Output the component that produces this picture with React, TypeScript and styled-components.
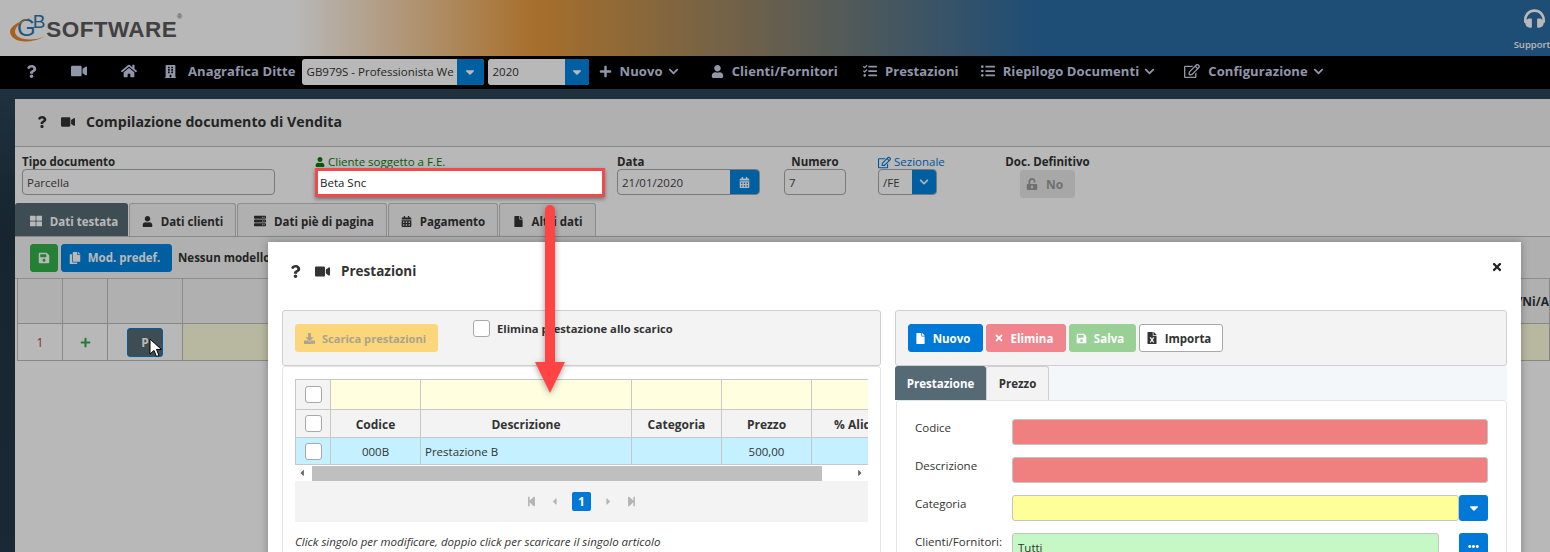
import React from "react";
import styled, { createGlobalStyle } from "styled-components";
import {
  FaBuilding,
  FaCalendarAlt,
  FaCaretDown,
  FaCaretLeft,
  FaCaretRight,
  FaChevronDown,
  FaCopy,
  FaDownload,
  FaEllipsisH,
  FaFile,
  FaFileExcel,
  FaHeadphones,
  FaHome,
  FaListUl,
  FaPlus,
  FaQuestion,
  FaRegEdit,
  FaSave,
  FaServer,
  FaStepBackward,
  FaStepForward,
  FaTasks,
  FaThLarge,
  FaTimes,
  FaUnlockAlt,
  FaUser,
  FaVideo,
} from "react-icons/fa";

const GlobalStyle = createGlobalStyle`
  html, body { margin: 0; padding: 0; background: #000; }
  * { box-sizing: border-box; }
`;

const Page = styled.div`
  position: relative;
  width: 1550px;
  height: 552px;
  overflow: hidden;
  font-family: "Open Sans", "Noto Sans", sans-serif;
  font-size: 12px;
  color: #333;
  display: flex;
  flex-direction: column;
`;

/* header */
const Header = styled.header`
  height: 56px;
  flex: none;
  display: flex;
  justify-content: space-between;
  background: linear-gradient(90deg, #fff 19%, #e89a3c 34.5%, #2a6ba3 67%, #2a6ba3 100%);
`;

const Logo = styled.div`
  position: relative;
  margin: 14px 0 0 10px;
  width: 176px;
  height: 32px;
  display: flex;
  align-items: flex-start;
  font-family: "Liberation Sans", Arial, sans-serif;
  font-weight: 700;
`;

const LogoSwoosh = styled.svg`
  position: absolute;
  left: 0;
  top: 0;
`;

const LogoG = styled.span`
  margin-left: 7px;
  margin-top: 1px;
  font-size: 24px;
  line-height: 26px;
  color: #2b78b0;
  font-weight: 400;
`;

const LogoB = styled.span`
  margin-top: -2px;
  margin-left: -3px;
  font-size: 19px;
  line-height: 20px;
  color: #2b78b0;
  font-weight: 400;
`;

const LogoWord = styled.span`
  margin-left: 1px;
  margin-top: 3px;
  font-size: 22.5px;
  line-height: 26px;
  letter-spacing: 0.4px;
  color: #5a5a5a;
`;

const LogoMark = styled.span`
  margin-top: -1px;
  font-size: 7px;
  line-height: 8px;
  color: #777;
`;

const Support = styled.div`
  flex: none;
  width: 40px;
  margin-right: -4px;
  padding-top: 8px;
  display: flex;
  flex-direction: column;
  align-items: center;
  gap: 9px;
  font-size: 9.5px;
  line-height: 13px;
  font-weight: 600;
  color: #fff;
  svg {
    width: 21px;
    height: 21px;
  }
`;

const SupportText = styled.span`
  margin-right: 4px;
`;

/* nav bar */
const Navbar = styled.nav`
  height: 33px;
  flex: none;
  display: flex;
  align-items: center;
  padding-bottom: 3px;
  background: #000;
  color: #cbd0ea;
  font-size: 13px;
  font-weight: 700;
`;

const NavItem = styled.div<{ $ml: number; $gap?: number }>`
  display: flex;
  align-items: center;
  flex: none;
  gap: ${(p) => p.$gap ?? 8}px;
  margin-left: ${(p) => p.$ml}px;
  white-space: nowrap;
  letter-spacing: 0.1px;
  svg {
    flex: none;
  }
`;

const NavChevron = styled(FaChevronDown)`
  width: 11px;
  height: 11px;
  margin-left: -3px;
`;

const NavSelect = styled.div<{ $w: number; $ml: number }>`
  flex: none;
  width: ${(p) => p.$w}px;
  margin-left: ${(p) => p.$ml}px;
  margin-top: 2px;
  height: 26px;
  display: flex;
  background: #fff;
  border-radius: 3px;
  overflow: hidden;
  color: #333;
  font-size: 11.5px;
  font-weight: 400;
  line-height: 26px;
`;

const NavSelectText = styled.div`
  flex: 1;
  min-width: 0;
  margin-right: 3px;
  padding-left: 5px;
  white-space: nowrap;
  overflow: hidden;
`;

const CaretButton = styled.div<{ $w: number }>`
  flex: none;
  width: ${(p) => p.$w}px;
  display: flex;
  align-items: center;
  justify-content: center;
  background: #0084e0;
  color: #fff;
`;

/* document panel behind the dialog */
const Workspace = styled.main`
  flex: 1;
  min-height: 0;
  padding: 10px 0 0 15px;
  background: linear-gradient(180deg, #2c4557 0%, #1f3442 30%, #26384a 100%);
`;

const Panel = styled.section`
  height: 100%;
  background: #fff;
  display: flex;
  flex-direction: column;
`;

const PanelTitle = styled.div`
  height: 48px;
  flex: none;
  display: flex;
  align-items: center;
  padding: 0 0 2px 21px;
  background: #f4f4f4;
  border-bottom: 1px solid #bdbdbd;
  color: #333;
  font-size: 14.2px;
  font-weight: 700;
`;

const TitleIcons = styled.div`
  display: flex;
  align-items: center;
  gap: 13px;
  margin-right: 11px;
`;

const FormRow = styled.div`
  height: 56px;
  flex: none;
  display: flex;
  padding: 8px 0 0 7px;
`;

const Field = styled.div<{ $w: number; $ml?: number; $center?: boolean }>`
  flex: none;
  width: ${(p) => p.$w}px;
  margin-left: ${(p) => p.$ml ?? 0}px;
  display: flex;
  flex-direction: column;
  align-items: ${(p) => (p.$center ? "center" : "stretch")};
`;

const FieldLabel = styled.label<{ $tone?: string; $center?: boolean }>`
  display: flex;
  align-items: center;
  justify-content: ${(p) => (p.$center ? "center" : "flex-start")};
  gap: 3px;
  height: 14px;
  white-space: nowrap;
  font-size: 11.5px;
  line-height: 14px;
  font-weight: ${(p) => (p.$tone ? 400 : 700)};
  color: ${(p) => p.$tone ?? "#333"};
  svg {
    flex: none;
  }
`;

const TextBox = styled.div`
  display: flex;
  height: 26px;
  border: 1px solid #a8a8a8;
  border-radius: 4px;
  overflow: hidden;
  font-size: 11.5px;
  line-height: 26px;
  color: #444;
`;

const TextBoxValue = styled.div`
  flex: 1;
  min-width: 0;
  padding-left: 4px;
  white-space: nowrap;
`;

const HighlightBox = styled.div`
  position: relative;
  z-index: 3;
  height: 29px;
  margin-top: -1px;
  padding-left: 2px;
  background: #fff;
  border: 3px solid #f04a4f;
  box-shadow: 0 2px 4px rgba(0, 0, 0, 0.4);
  font-size: 11.5px;
  line-height: 23px;
  color: #222;
`;

const DisabledSwitch = styled.div`
  margin-top: 1px;
  width: 55px;
  height: 28px;
  padding-right: 6px;
  display: flex;
  align-items: center;
  justify-content: center;
  gap: 8px;
  background: #e8e8e8;
  border-radius: 3px;
  color: #9c9c9c;
  font-weight: 700;
  font-size: 12px;
`;

const TabStrip = styled.div`
  height: 34px;
  flex: none;
  display: flex;
  align-items: stretch;
  border-bottom: 1px solid #bcbcbc;
`;

const TabButton = styled.div<{ $active?: boolean; $w: number; $shift?: number }>`
  width: ${(p) => p.$w}px;
  flex: none;
  display: flex;
  align-items: center;
  justify-content: center;
  gap: 8px;
  padding: 2px 0 0 ${(p) => p.$shift ?? 0}px;
  margin-right: 1px;
  white-space: nowrap;
  font-size: 11.5px;
  font-weight: 700;
  border: 1px solid ${(p) => (p.$active ? "#566a75" : "#c4c4c4")};
  border-bottom: 0;
  border-radius: 3px 3px 0 0;
  background: ${(p) => (p.$active ? "#566a75" : "#f4f4f4")};
  color: ${(p) => (p.$active ? "#fff" : "#333")};
`;

const ToolRow = styled.div`
  height: 42px;
  flex: none;
  display: flex;
  align-items: center;
  gap: 3px;
  padding-left: 15px;
  background: #f4f4f4;
  border-bottom: 1px solid #c4c4c4;
  font-size: 11.5px;
  font-weight: 700;
`;

const ActionButton = styled.div<{ $bg: string; $w: number; $fg?: string; $border?: string; $pr?: number }>`
  flex: none;
  width: ${(p) => p.$w}px;
  height: 28px;
  padding-right: ${(p) => p.$pr ?? 0}px;
  display: flex;
  align-items: center;
  justify-content: center;
  gap: 7px;
  white-space: nowrap;
  border-radius: 3px;
  border: 1px solid ${(p) => p.$border ?? p.$bg};
  background: ${(p) => p.$bg};
  color: ${(p) => p.$fg ?? "#fff"};
  font-size: 11.5px;
  font-weight: 700;
`;

const ScaricaLabel = styled.span`
  font-size: 11.1px;
`;

const ToolNote = styled.span`
  margin-left: 3px;
  white-space: nowrap;
  color: #333;
`;

const MainTable = styled.div`
  display: grid;
  grid-template-columns: 45px 45px 75px 1fr;
  grid-template-rows: 45px 37px;
  margin-left: 2px;
  border-left: 1px solid #bcbcbc;
`;

const MainCell = styled.div<{ $bg?: string; $fg?: string; $right?: boolean }>`
  display: flex;
  align-items: center;
  justify-content: ${(p) => (p.$right ? "flex-end" : "center")};
  border-right: 1px solid #bcbcbc;
  border-bottom: 1px solid #bcbcbc;
  background: ${(p) => p.$bg ?? "#f4f4f4"};
  color: ${(p) => p.$fg ?? "#333"};
  font-weight: ${(p) => (p.$right ? 700 : 400)};
  white-space: nowrap;
`;

const RowButton = styled.div`
  position: relative;
  width: 36px;
  height: 29px;
  display: flex;
  align-items: center;
  justify-content: center;
  background: #566a75;
  border: 1px solid #0084e0;
  border-radius: 3px;
  color: #fff;
  font-weight: 700;
`;

const Cursor = styled.svg`
  position: absolute;
  z-index: 3;
  left: 21px;
  top: 9px;
`;

const Backdrop = styled.div`
  position: absolute;
  inset: 0;
  z-index: 2;
  background: rgba(0, 0, 0, 0.28);
`;

/* dialog */
const Modal = styled.div`
  position: absolute;
  z-index: 4;
  left: 268px;
  top: 242px;
  width: 1253px;
  height: 330px;
  background: #fff;
  box-shadow: 0 0 8px rgba(0, 0, 0, 0.3);
  padding: 0 14px;
`;

const ModalHead = styled.div`
  height: 68px;
  display: flex;
  align-items: center;
  padding: 0 4px 10px 7px;
  color: #333;
  font-size: 13.5px;
  font-weight: 700;
`;

const ModalClose = styled(FaTimes)`
  width: 12px;
  height: 12px;
  margin-left: auto;
  margin-top: -8px;
  color: #222;
`;

const ModalColumns = styled.div`
  display: grid;
  grid-template-columns: 599px 612px;
  column-gap: 14px;
`;

const Toolbar = styled.div`
  position: relative;
  height: 56px;
  display: flex;
  align-items: center;
  gap: 3px;
  padding-left: 12px;
  background: #f3f3f3;
  border: 1px solid #cfcfcf;
  border-radius: 3px;
`;

const CheckRow = styled.div`
  display: flex;
  align-items: center;
  gap: 7px;
  align-self: flex-start;
  margin: 9px 0 0 32px;
  font-size: 11.2px;
  font-weight: 700;
  white-space: nowrap;
`;

const CheckBox = styled.span`
  flex: none;
  display: block;
  width: 17px;
  height: 17px;
  background: #fff;
  border: 1px solid #a8a8a8;
  border-radius: 3px;
`;

const ListCard = styled.div`
  height: 200px;
  padding: 12px 12px 0;
  border: 1px solid #e2e6ea;
  border-radius: 3px;
`;

const GridWrap = styled.div`
  overflow: hidden;
`;

const DataGrid = styled.div`
  display: grid;
  width: 640px;
  grid-template-columns: 35px 90px 211px 90px 90px 110px;
  grid-template-rows: 30px 28px 27px;
  border-left: 1px solid #c8c8c8;
  border-top: 1px solid #c8c8c8;
`;

const DataCell = styled.div<{ $bg: string; $head?: boolean; $left?: boolean }>`
  display: flex;
  align-items: center;
  justify-content: ${(p) => (p.$left ? "flex-start" : "center")};
  padding-left: ${(p) => (p.$left ? "4px" : "0")};
  padding-top: ${(p) => (p.$head ? "1px" : "0")};
  white-space: nowrap;
  background: ${(p) => p.$bg};
  border-right: 1px solid #c8c8c8;
  border-bottom: 1px solid #c8c8c8;
  font-size: ${(p) => (p.$head ? "12px" : "11.5px")};
  font-weight: ${(p) => (p.$head ? 700 : 400)};
  color: #333;
`;

const ScrollBar = styled.div`
  height: 16px;
  padding: 0 3px 0 2px;
  display: flex;
  align-items: center;
  color: #666;
  svg {
    flex: none;
    width: 10px;
    height: 10px;
  }
`;

const ScrollTrack = styled.div`
  flex: 1;
  height: 15px;
  padding-right: 33px;
  margin-left: 5px;
`;

const ScrollThumb = styled.div`
  height: 100%;
  background: #bfbfbf;
`;

const Pager = styled.div`
  height: 41px;
  display: flex;
  align-items: center;
  justify-content: center;
  gap: 12px;
  background: #f3f3f3;
  color: #b4b4b4;
  svg {
    width: 11px;
    height: 11px;
  }
`;

const PageNumber = styled.span`
  width: 19px;
  height: 19px;
  display: flex;
  align-items: center;
  justify-content: center;
  background: #0078d7;
  border-radius: 2px;
  color: #fff;
  font-weight: 700;
  font-size: 12px;
`;

const Hint = styled.p`
  margin: 12px 0 0;
  font-size: 11.5px;
  line-height: 16px;
  font-style: italic;
  color: #333;
  white-space: nowrap;
`;

const SubTabs = styled.div`
  height: 34px;
  display: flex;
  background: #f4f7f9;
`;

const SubTab = styled.div<{ $active?: boolean; $w: number }>`
  flex: none;
  width: ${(p) => p.$w}px;
  display: flex;
  align-items: center;
  justify-content: center;
  font-size: 11.5px;
  font-weight: 700;
  border: 1px solid ${(p) => (p.$active ? "#566a75" : "#cfcfcf")};
  border-bottom: 0;
  border-radius: 3px 3px 0 0;
  background: ${(p) => (p.$active ? "#566a75" : "#f3f3f3")};
  color: ${(p) => (p.$active ? "#fff" : "#333")};
`;

const DetailCard = styled.div`
  height: 170px;
  margin-left: 1px;
  padding: 18px 18px 0;
  display: flex;
  flex-direction: column;
  gap: 12px;
  border: 1px solid #e2e6ea;
  border-radius: 3px;
`;

const DetailRow = styled.div`
  display: grid;
  grid-template-columns: 97px 1fr;
  height: 26px;
`;

const DetailLabel = styled.div`
  padding-top: 1px;
  font-size: 11.5px;
  line-height: 16px;
  color: #333;
  white-space: nowrap;
`;

const ColorInput = styled.div<{ $bg: string }>`
  height: 26px;
  padding-left: 5px;
  background: ${(p) => p.$bg};
  border: 1px solid #c4c4c4;
  border-radius: 3px;
  font-size: 11.5px;
  line-height: 28px;
  color: #333;
`;

const InputGroup = styled.div`
  display: flex;
  height: 26px;
`;

const GrowInput = styled(ColorInput)`
  flex: 1;
`;

const SideButton = styled.div<{ $ml?: number }>`
  flex: none;
  width: 29px;
  height: 26px;
  margin-left: ${(p) => p.$ml ?? 0}px;
  display: flex;
  align-items: center;
  justify-content: center;
  background: #0078d7;
  border-radius: 3px;
  color: #fff;
`;

const Arrow = styled.svg`
  position: absolute;
  z-index: 5;
  left: 528px;
  top: 200px;
  filter: drop-shadow(0 2px 3px rgba(0, 0, 0, 0.35));
`;

const gridColumns = ["Codice", "Descrizione", "Categoria", "Prezzo", "% Aliquota"];

export default function App() {
  return (
    <Page>
      <GlobalStyle />
      <Header>
        <Logo>
          <LogoSwoosh width="50" height="32" viewBox="0 0 50 32">
            <path d="M23 3 C9 7 0 12 0 18 C1 27 16 32 36 22 C22 28 6 26 5 18 C5 12 12 7 23 3 Z" fill="#e8872a" />
          </LogoSwoosh>
          <LogoG>G</LogoG>
          <LogoB>B</LogoB>
          <LogoWord>SOFTWARE</LogoWord>
          <LogoMark>®</LogoMark>
        </Logo>
        <Support>
          <FaHeadphones />
          <SupportText>Support</SupportText>
        </Support>
      </Header>

      <Navbar>
        <NavItem $ml={25}><FaQuestion size={13} /></NavItem>
        <NavItem $ml={33}><FaVideo size={16} /></NavItem>
        <NavItem $ml={34}><FaHome size={16} /></NavItem>
        <NavItem $ml={27} $gap={11}>
          <FaBuilding size={13} />
          <span>Anagrafica Ditte</span>
        </NavItem>
        <NavSelect $w={182} $ml={6}>
          <NavSelectText>GB979S - Professionista Web</NavSelectText>
          <CaretButton $w={27}><FaCaretDown size={14} /></CaretButton>
        </NavSelect>
        <NavSelect $w={101} $ml={4}>
          <NavSelectText>2020</NavSelectText>
          <CaretButton $w={24}><FaCaretDown size={14} /></CaretButton>
        </NavSelect>
        <NavItem $ml={10}>
          <FaPlus size={13} />
          <span>Nuovo</span>
          <NavChevron />
        </NavItem>
        <NavItem $ml={32}>
          <FaUser size={13} />
          <span>Clienti/Fornitori</span>
        </NavItem>
        <NavItem $ml={25}>
          <FaTasks size={14} />
          <span>Prestazioni</span>
        </NavItem>
        <NavItem $ml={22}>
          <FaListUl size={14} />
          <span>Riepilogo Documenti</span>
          <NavChevron />
        </NavItem>
        <NavItem $ml={29}>
          <FaRegEdit size={16} />
          <span>Configurazione</span>
          <NavChevron />
        </NavItem>
      </Navbar>

      <Workspace>
        <Panel>
          <PanelTitle>
            <TitleIcons>
              <FaQuestion size={12} />
              <FaVideo size={14} />
            </TitleIcons>
            Compilazione documento di Vendita
          </PanelTitle>

          <FormRow>
            <Field $w={253}>
              <FieldLabel>Tipo documento</FieldLabel>
              <TextBox><TextBoxValue>Parcella</TextBoxValue></TextBox>
            </Field>
            <Field $w={290} $ml={40}>
              <FieldLabel $tone="#0b7a0b"><FaUser size={10} />Cliente soggetto a F.E.</FieldLabel>
              <HighlightBox>Beta Snc</HighlightBox>
            </Field>
            <Field $w={143} $ml={12}>
              <FieldLabel>Data</FieldLabel>
              <TextBox>
                <TextBoxValue>21/01/2020</TextBoxValue>
                <CaretButton $w={29}><FaCalendarAlt size={11} /></CaretButton>
              </TextBox>
            </Field>
            <Field $w={62} $ml={24}>
              <FieldLabel $center>Numero</FieldLabel>
              <TextBox><TextBoxValue>7</TextBoxValue></TextBox>
            </Field>
            <Field $w={59} $ml={32}>
              <FieldLabel $tone="#0078d7"><FaRegEdit size={13} />Sezionale</FieldLabel>
              <TextBox>
                <TextBoxValue>/FE</TextBoxValue>
                <CaretButton $w={24}><FaChevronDown size={10} /></CaretButton>
              </TextBox>
            </Field>
            <Field $w={85} $ml={68} $center>
              <FieldLabel $center>Doc. Definitivo</FieldLabel>
              <DisabledSwitch><FaUnlockAlt size={12} />No</DisabledSwitch>
            </Field>
          </FormRow>

          <TabStrip>
            <TabButton $active $w={113} $shift={5}><FaThLarge size={12} />Dati testata</TabButton>
            <TabButton $w={107}><FaUser size={11} />Dati clienti</TabButton>
            <TabButton $w={150} $shift={4}><FaServer size={12} />Dati piè di pagina</TabButton>
            <TabButton $w={110}><FaCalendarAlt size={11} />Pagamento</TabButton>
            <TabButton $w={97}><FaFile size={11} />Altri dati</TabButton>
          </TabStrip>

          <ToolRow>
            <ActionButton $bg="#33b24a" $w={28}><FaSave size={12} /></ActionButton>
            <ActionButton $bg="#0084e0" $w={111} $pr={4}><FaCopy size={12} />Mod. predef.</ActionButton>
            <ToolNote>Nessun modello predefinito</ToolNote>
          </ToolRow>

          <MainTable>
            <MainCell />
            <MainCell />
            <MainCell />
            <MainCell $right>IVA (N/Ni/A</MainCell>
            <MainCell $bg="#fff" $fg="#b84a3a">1</MainCell>
            <MainCell $bg="#fff" $fg="#3aa84a"><FaPlus size={11} /></MainCell>
            <MainCell $bg="#fff">
              <RowButton>
                P
                <Cursor width="14" height="20" viewBox="0 0 14 20">
                  <path d="M1 1 L1 16 L5 12.5 L7.5 18.5 L10 17.5 L7.5 11.5 L12.5 11.5 Z" fill="#fff" stroke="#000" strokeWidth="1" />
                </Cursor>
              </RowButton>
            </MainCell>
            <MainCell $bg="#ffffe0" />
          </MainTable>
        </Panel>
      </Workspace>

      <Backdrop />

      <Modal>
        <ModalHead>
          <TitleIcons>
            <FaQuestion size={13} />
            <FaVideo size={15} />
          </TitleIcons>
          Prestazioni
          <ModalClose />
        </ModalHead>
        <ModalColumns>
          <div>
            <Toolbar>
              <ActionButton $bg="#fbd67a" $w={143} $fg="#a9a48f" $pr={3}><FaDownload size={11} /><ScaricaLabel>Scarica prestazioni</ScaricaLabel></ActionButton>
              <CheckRow>
                <CheckBox />
                Elimina prestazione allo scarico
              </CheckRow>
            </Toolbar>
            <ListCard>
              <GridWrap>
                <DataGrid>
                  <DataCell $bg="#f3f3f3"><CheckBox /></DataCell>
                  <DataCell $bg="#ffffe0" />
                  <DataCell $bg="#ffffe0" />
                  <DataCell $bg="#ffffe0" />
                  <DataCell $bg="#ffffe0" />
                  <DataCell $bg="#ffffe0" />
                  <DataCell $bg="#f3f3f3"><CheckBox /></DataCell>
                  {gridColumns.map((c) => (
                    <DataCell $bg="#f3f3f3" $head key={c}>{c}</DataCell>
                  ))}
                  <DataCell $bg="#c5f0ff"><CheckBox /></DataCell>
                  <DataCell $bg="#c5f0ff">000B</DataCell>
                  <DataCell $bg="#c5f0ff" $left>Prestazione B</DataCell>
                  <DataCell $bg="#c5f0ff" />
                  <DataCell $bg="#c5f0ff">500,00</DataCell>
                  <DataCell $bg="#c5f0ff" />
                </DataGrid>
              </GridWrap>
              <ScrollBar>
                <FaCaretLeft />
                <ScrollTrack><ScrollThumb /></ScrollTrack>
                <FaCaretRight />
              </ScrollBar>
              <Pager>
                <FaStepBackward />
                <FaCaretLeft />
                <PageNumber>1</PageNumber>
                <FaCaretRight />
                <FaStepForward />
              </Pager>
              <Hint>Click singolo per modificare, doppio click per scaricare il singolo articolo</Hint>
            </ListCard>
          </div>
          <div>
            <Toolbar>
              <ActionButton $bg="#0078d7" $w={75} $pr={6}><FaFile size={11} />Nuovo</ActionButton>
              <ActionButton $bg="#f0858e" $w={80} $pr={5}><FaTimes size={10} />Elimina</ActionButton>
              <ActionButton $bg="#98d095" $w={67} $pr={5}><FaSave size={11} />Salva</ActionButton>
              <ActionButton $bg="#fff" $w={84} $fg="#333" $border="#a8a8a8" $pr={5}><FaFileExcel size={12} />Importa</ActionButton>
            </Toolbar>
            <SubTabs>
              <SubTab $active $w={91}>Prestazione</SubTab>
              <SubTab $w={63}>Prezzo</SubTab>
            </SubTabs>
            <DetailCard>
              <DetailRow>
                <DetailLabel>Codice</DetailLabel>
                <ColorInput $bg="#f08080" />
              </DetailRow>
              <DetailRow>
                <DetailLabel>Descrizione</DetailLabel>
                <ColorInput $bg="#f08080" />
              </DetailRow>
              <DetailRow>
                <DetailLabel>Categoria</DetailLabel>
                <InputGroup>
                  <GrowInput $bg="#ffff99" />
                  <SideButton><FaCaretDown size={14} /></SideButton>
                </InputGroup>
              </DetailRow>
              <DetailRow>
                <DetailLabel>Clienti/Fornitori:</DetailLabel>
                <InputGroup>
                  <GrowInput $bg="#c5f8c5">Tutti</GrowInput>
                  <SideButton $ml={20}><FaEllipsisH size={11} /></SideButton>
                </InputGroup>
              </DetailRow>
            </DetailCard>
          </div>
        </ModalColumns>
      </Modal>

      <Arrow width="44" height="200" viewBox="0 0 44 200">
        <path d="M17 10 a5 5 0 0 1 10 0 L27 162 L37 162 L22 193 L7 162 L17 162 Z" fill="#ff4444" />
      </Arrow>
    </Page>
  );
}
